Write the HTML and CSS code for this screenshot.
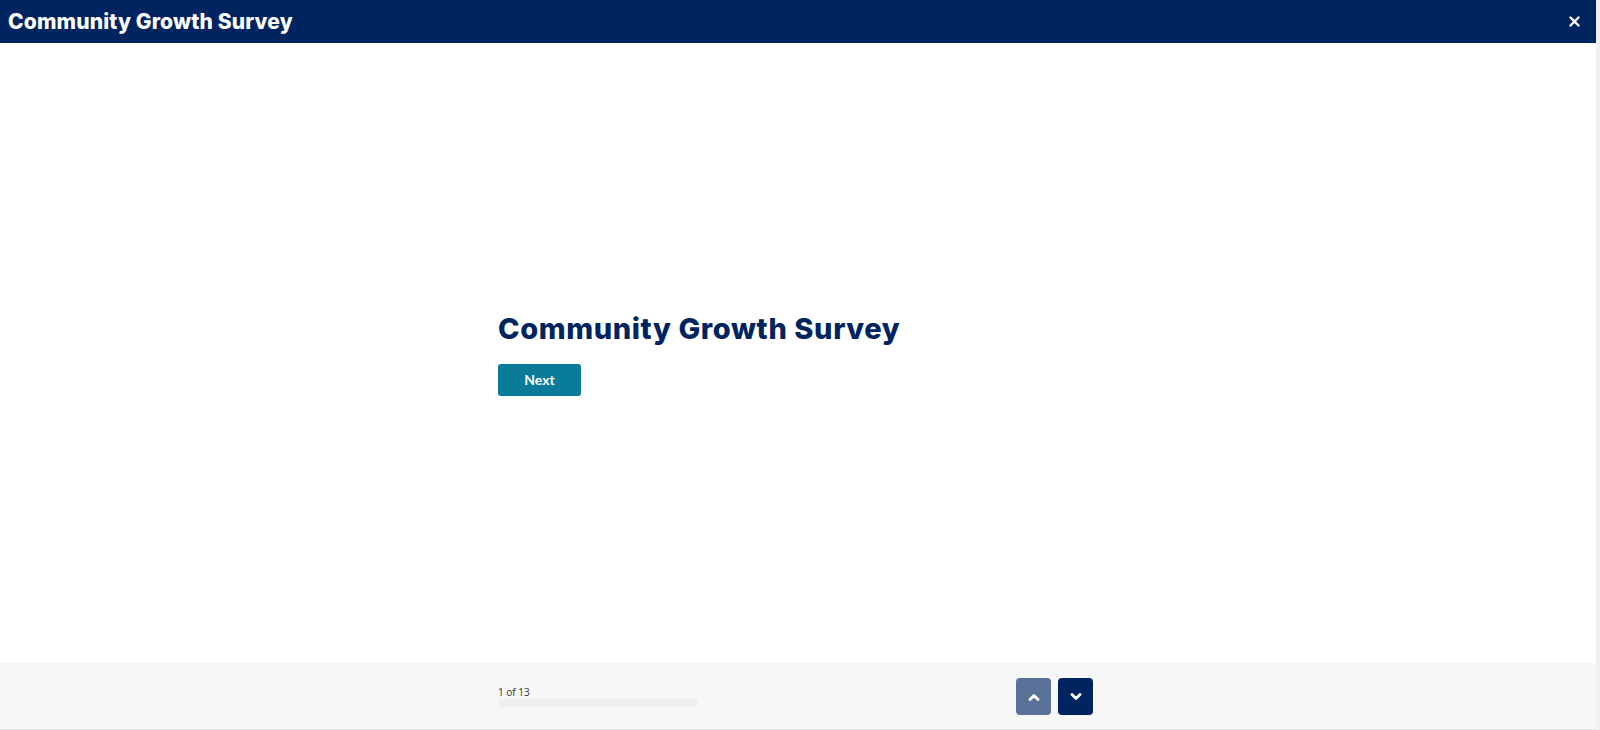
FILE: index.html
```html
<!DOCTYPE html>
<html lang="en">
<head>
    <meta charset="UTF-8">
    <meta name="viewport" content="width=device-width, initial-scale=1.0">
    <title>Community Growth Survey</title>
    <link rel="stylesheet" href="styles.css">
</head>
<body>
    <div class="page">
        <div class="app">
            <header class="topbar">
                <h1 class="topbar-title">Community Growth Survey</h1>
                <button class="close-btn" aria-label="Close">
                    <svg width="11" height="11" viewBox="0 0 11 11">
                        <path d="M1.5 1.5 L9.5 9.5 M9.5 1.5 L1.5 9.5" stroke="#fff" stroke-width="2.4" stroke-linecap="round"/>
                    </svg>
                </button>
            </header>

            <main class="content">
                <div class="column">
                    <h2 class="survey-title">Community Growth Survey</h2>
                    <button class="next-btn">Next</button>
                </div>
            </main>

            <footer class="bottombar">
                <div class="column bottom-row">
                    <div class="progress">
                        <span class="progress-label">1 of 13</span>
                        <div class="progress-track"><div class="progress-fill" style="width: 0%"></div></div>
                    </div>
                    <div class="nav">
                        <button class="nav-btn nav-up" aria-label="Previous">
                            <svg width="12" height="8" viewBox="0 0 12 8">
                                <polyline points="2,6.5 6,2.5 10,6.5" fill="none" stroke="#fff" stroke-width="2.8" stroke-linecap="round" stroke-linejoin="round"/>
                            </svg>
                        </button>
                        <button class="nav-btn nav-down" aria-label="Next">
                            <svg width="12" height="8" viewBox="0 0 12 8">
                                <polyline points="2,1.5 6,5.5 10,1.5" fill="none" stroke="#fff" stroke-width="2.8" stroke-linecap="round" stroke-linejoin="round"/>
                            </svg>
                        </button>
                    </div>
                </div>
            </footer>
        </div>
        <div class="scrollbar"></div>
    </div>
</body>
</html>
```

FILE: styles.css
```css
html, body {
    margin: 0;
    padding: 0;
    height: 100%;
}
body {
    font-family: "Lato", "Open Sans", sans-serif;
    background-color: #ffffff;
    color: #00245f;
    overflow: hidden;
}
.page {
    display: flex;
    height: 730px;
}
.app {
    flex: 1;
    display: flex;
    flex-direction: column;
    min-width: 0;
}
.scrollbar {
    width: 4px;
    background-color: #f0f0f0;
}
.topbar {
    height: 43px;
    background-color: #00245f;
    display: flex;
    align-items: center;
    justify-content: space-between;
    padding: 0 16px 0 8px;
}
.topbar-title {
    margin: 0;
    font-family: "Inter", sans-serif;
    font-weight: 800;
    font-size: 21px;
    letter-spacing: 0.15px;
    color: #ffffff;
}
.close-btn {
    background: none;
    border: 0;
    padding: 0;
    display: flex;
    cursor: pointer;
}
.content {
    flex: 1;
    display: flex;
    align-items: center;
    justify-content: center;
}
.column {
    width: 600px;
}
.survey-title {
    margin: 0 0 18px;
    font-family: "Inter", sans-serif;
    font-weight: 800;
    font-size: 29px;
    letter-spacing: 0.6px;
    color: #00245f;
}
.next-btn {
    width: 83px;
    height: 32px;
    background-color: #0a7b98;
    color: #ffffff;
    border: 0;
    border-radius: 3px;
    font-family: "Lato", sans-serif;
    font-weight: 700;
    font-size: 14px;
    cursor: pointer;
}
.bottombar {
    height: 66px;
    background-color: #f7f7f7;
    border-bottom: 1px solid #e2e2e2;
    display: flex;
    justify-content: center;
}
.bottom-row {
    display: flex;
    justify-content: space-between;
    align-items: flex-start;
    padding-top: 15px;
    padding-right: 5px;
    box-sizing: border-box;
}
.progress {
    padding-top: 8px;
}
.progress-label {
    display: block;
    font-family: "Open Sans", sans-serif;
    font-size: 10px;
    color: #333333;
    line-height: 12px;
}
.progress-track {
    width: 200px;
    height: 8px;
    margin-top: 1px;
    border-radius: 4px;
    background-color: #f0f0f0;
}
.progress-fill {
    height: 100%;
    border-radius: 4px;
    background-color: #00245f;
}
.nav {
    display: flex;
    gap: 7px;
}
.nav-btn {
    width: 35px;
    height: 37px;
    border: 0;
    border-radius: 4px;
    display: flex;
    align-items: center;
    justify-content: center;
    cursor: pointer;
}
.nav-up {
    background-color: #5a7199;
}
.nav-down {
    background-color: #00245f;
}
```
